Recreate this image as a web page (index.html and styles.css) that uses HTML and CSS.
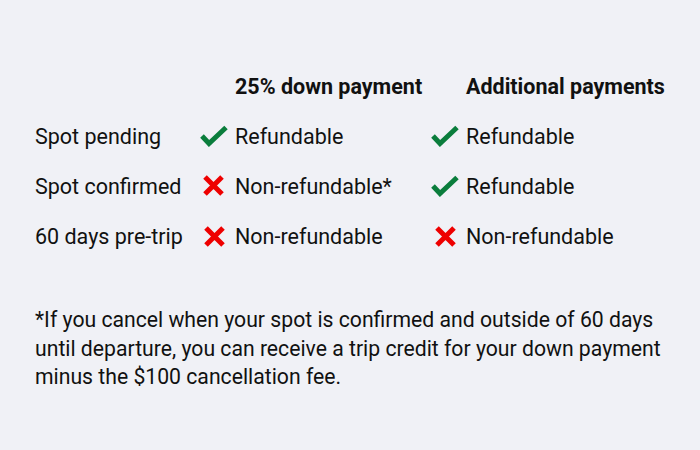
FILE: index.html
```html
<!DOCTYPE html>
<html lang="en">
<head>
<meta charset="utf-8">
<title>Cancellation policy</title>
<link rel="stylesheet" href="styles.css">
</head>
<body>
<main class="page">
  <div class="policy">
    <div class="cell label"></div>
    <div class="cell icon"></div>
    <div class="cell text head">25% down payment</div>
    <div class="cell icon"></div>
    <div class="cell text head">Additional payments</div>

    <div class="cell label">Spot pending</div>
    <div class="cell icon"><svg class="check" viewBox="0 0 28 22" width="28" height="22"><polyline points="2,11 9,18.5 26,2.5"/></svg></div>
    <div class="cell text">Refundable</div>
    <div class="cell icon"><svg class="check" viewBox="0 0 28 22" width="28" height="22"><polyline points="2,11 9,18.5 26,2.5"/></svg></div>
    <div class="cell text">Refundable</div>

    <div class="cell label">Spot confirmed</div>
    <div class="cell icon"><svg class="cross shift2" viewBox="0 0 23 23" width="23" height="23"><path d="M3 3L20 20M20 3L3 20"/></svg></div>
    <div class="cell text">Non-refundable*</div>
    <div class="cell icon"><svg class="check" viewBox="0 0 28 22" width="28" height="22"><polyline points="2,11 9,18.5 26,2.5"/></svg></div>
    <div class="cell text">Refundable</div>

    <div class="cell label">60 days pre-trip</div>
    <div class="cell icon"><svg class="cross" viewBox="0 0 23 23" width="23" height="23"><path d="M3 3L20 20M20 3L3 20"/></svg></div>
    <div class="cell text">Non-refundable</div>
    <div class="cell icon"><svg class="cross" viewBox="0 0 23 23" width="23" height="23"><path d="M3 3L20 20M20 3L3 20"/></svg></div>
    <div class="cell text">Non-refundable</div>
  </div>

  <p class="note">*If you cancel when your spot is confirmed and outside of 60 days until departure, you can receive a trip credit for your down payment minus the $100 cancellation fee.</p>
</main>
</body>
</html>
```

FILE: styles.css
```css
html, body {
  margin: 0;
  padding: 0;
  background: #f0f1f6;
}

body {
  font-family: Roboto, "Noto Sans", "Liberation Sans", sans-serif;
  font-size: 21.5px;
  color: #111111;
  width: 700px;
  height: 450px;
}

.page {
  padding: 61px 20px 0 35px;
}

.policy {
  display: grid;
  grid-template-columns: 160px 33px 196px 35px auto;
  grid-auto-rows: 50px;
  align-items: center;
}

.cell {
  display: flex;
  align-items: center;
  height: 100%;
  white-space: nowrap;
}

.icon {
  justify-content: flex-end;
}

.text {
  padding-left: 7px;
}

.head {
  font-weight: 700;
}

.check polyline {
  fill: none;
  stroke: #0a7d3c;
  stroke-width: 5;
  stroke-linecap: butt;
  stroke-linejoin: miter;
}

.cross path {
  fill: none;
  stroke: #ee0000;
  stroke-width: 5;
  stroke-linecap: butt;
}

.cross {
  margin-right: 2px;
}

.shift2 {
  margin-right: 3px;
  margin-top: -2px;
}

.note {
  margin: 45px 0 0;
  font-size: 21.2px;
  line-height: 28.5px;
}
```
